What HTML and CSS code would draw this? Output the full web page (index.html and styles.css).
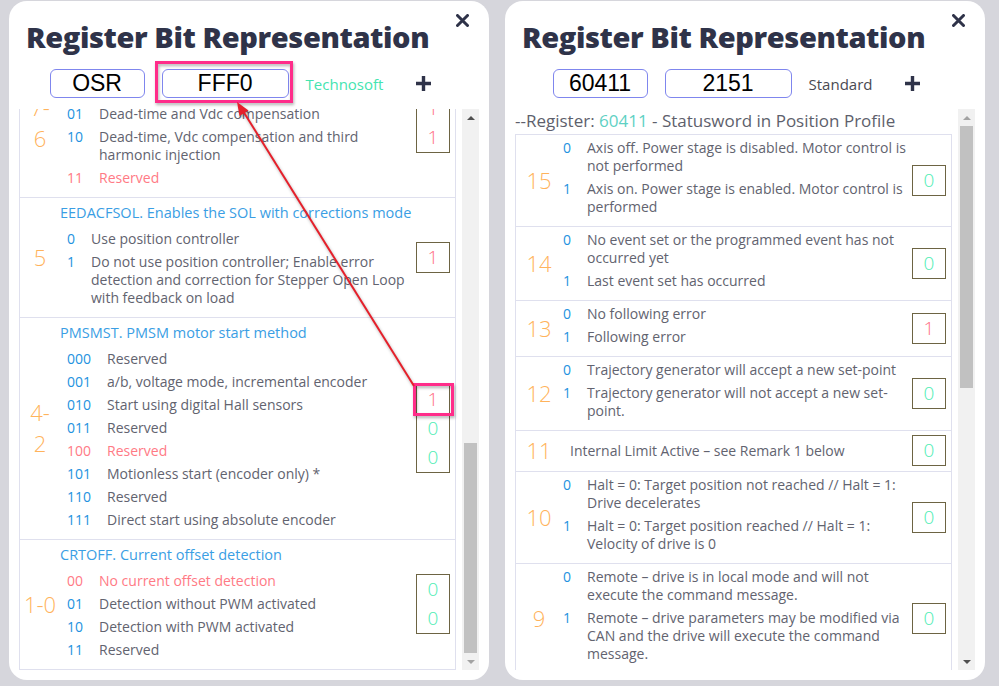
FILE: index.html
```html
<!DOCTYPE html>
<html lang="en">
<head>
<meta charset="utf-8">
<title>Register Bit Representation</title>
<link rel="stylesheet" href="styles.css">
</head>
<body>
<main class="desk">

  <section class="card">
    <div class="title-row">
      <h1 class="title">Register Bit Representation</h1>
      <button class="close" aria-label="Close"><svg viewBox="0 0 13 13" width="13" height="13"><path d="M1.5 1.5 L11.5 11.5 M11.5 1.5 L1.5 11.5" stroke="#2f3349" stroke-width="3" stroke-linecap="round"/></svg></button>
    </div>
    <div class="inputs">
      <div class="field field-reg">OSR</div>
      <div class="field field-val">FFF0</div>
      <span class="source source-ts">Technosoft</span>
      <button class="add" aria-label="Add"><svg viewBox="0 0 17 17" width="17" height="17"><path d="M8.5 1 V16 M1 8.5 H16" stroke="#2f3349" stroke-width="3.4"/></svg></button>
    </div>
    <div class="scroller">
      <div class="viewport viewport-end">
        <div class="bitlist bitlist-osr">
          <div class="bitrow">
            <div class="bit">8</div>
            <div class="desc">
              <div class="ftitle">Reserved</div>
              <ul class="opts">
                <li class="opt"><span class="code">0</span><span class="text">Reserved</span></li>
              </ul>
            </div>
            <div class="vals"><span class="v v0">0</span></div>
          </div>
          <div class="bitrow">
            <div class="bit">7-<br>6</div>
            <div class="desc">
              <div class="ftitle">DTCOMP. Dead-time compensation mode</div>
              <ul class="opts">
                <li class="opt"><span class="code">00</span><span class="text">No compensation</span></li>
                <li class="opt"><span class="code">01</span><span class="text">Dead-time and Vdc compensation</span></li>
                <li class="opt"><span class="code">10</span><span class="text">Dead-time, Vdc compensation and third harmonic injection</span></li>
                <li class="opt is-set"><span class="code">11</span><span class="text">Reserved</span></li>
              </ul>
            </div>
            <div class="vals"><span class="v v1">1</span><span class="v v1">1</span></div>
          </div>
          <div class="bitrow">
            <div class="bit">5</div>
            <div class="desc">
              <div class="ftitle">EEDACFSOL. Enables the SOL with corrections mode</div>
              <ul class="opts">
                <li class="opt"><span class="code">0</span><span class="text">Use position controller</span></li>
                <li class="opt"><span class="code">1</span><span class="text">Do not use position controller; Enable error detection and correction for Stepper Open Loop with feedback on load</span></li>
              </ul>
            </div>
            <div class="vals"><span class="v v1">1</span></div>
          </div>
          <div class="bitrow">
            <div class="bit">4-<br>2</div>
            <div class="desc">
              <div class="ftitle">PMSMST. PMSM motor start method</div>
              <ul class="opts">
                <li class="opt"><span class="code">000</span><span class="text">Reserved</span></li>
                <li class="opt"><span class="code">001</span><span class="text">a/b, voltage mode, incremental encoder</span></li>
                <li class="opt"><span class="code">010</span><span class="text">Start using digital Hall sensors</span></li>
                <li class="opt"><span class="code">011</span><span class="text">Reserved</span></li>
                <li class="opt is-set"><span class="code">100</span><span class="text">Reserved</span></li>
                <li class="opt"><span class="code">101</span><span class="text">Motionless start (encoder only) *</span></li>
                <li class="opt"><span class="code">110</span><span class="text">Reserved</span></li>
                <li class="opt"><span class="code">111</span><span class="text">Direct start using absolute encoder</span></li>
              </ul>
            </div>
            <div class="vals"><span class="v v1">1</span><span class="v v0">0</span><span class="v v0">0</span></div>
          </div>
          <div class="bitrow">
            <div class="bit">1-0</div>
            <div class="desc">
              <div class="ftitle">CRTOFF. Current offset detection</div>
              <ul class="opts">
                <li class="opt is-set"><span class="code">00</span><span class="text">No current offset detection</span></li>
                <li class="opt"><span class="code">01</span><span class="text">Detection without PWM activated</span></li>
                <li class="opt"><span class="code">10</span><span class="text">Detection with PWM activated</span></li>
                <li class="opt"><span class="code">11</span><span class="text">Reserved</span></li>
              </ul>
            </div>
            <div class="vals"><span class="v v0">0</span><span class="v v0">0</span></div>
          </div>
        </div>
      </div>
      <div class="sbar sbar-end">
        <span class="sb-btn"><span class="tri tri-up"></span></span>
        <div class="sb-track"><span class="sb-thumb thumb-osr"></span></div>
        <span class="sb-btn"><span class="tri tri-down is-dim"></span></span>
      </div>
    </div>
  </section>

  <section class="card">
    <div class="title-row">
      <h1 class="title">Register Bit Representation</h1>
      <button class="close" aria-label="Close"><svg viewBox="0 0 13 13" width="13" height="13"><path d="M1.5 1.5 L11.5 11.5 M11.5 1.5 L1.5 11.5" stroke="#2f3349" stroke-width="3" stroke-linecap="round"/></svg></button>
    </div>
    <div class="inputs">
      <div class="field field-reg">60411</div>
      <div class="field field-val">2151</div>
      <span class="source source-std">Standard</span>
      <button class="add" aria-label="Add"><svg viewBox="0 0 17 17" width="17" height="17"><path d="M8.5 1 V16 M1 8.5 H16" stroke="#2f3349" stroke-width="3.4"/></svg></button>
    </div>
    <div class="scroller">
      <div class="viewport">
        <div class="reg-head">--Register: <span class="reg-id">60411</span> - Statusword in Position Profile</div>
        <div class="bitlist bitlist-std">
          <div class="bitrow">
            <div class="bit">15</div>
            <div class="desc">
              <ul class="opts">
                <li class="opt"><span class="code">0</span><span class="text">Axis off. Power stage is disabled. Motor control is not performed</span></li>
                <li class="opt"><span class="code">1</span><span class="text">Axis on. Power stage is enabled. Motor control is performed</span></li>
              </ul>
            </div>
            <div class="vals"><span class="v v0">0</span></div>
          </div>
          <div class="bitrow">
            <div class="bit">14</div>
            <div class="desc">
              <ul class="opts">
                <li class="opt"><span class="code">0</span><span class="text">No event set or the programmed event has not occurred yet</span></li>
                <li class="opt"><span class="code">1</span><span class="text">Last event set has occurred</span></li>
              </ul>
            </div>
            <div class="vals"><span class="v v0">0</span></div>
          </div>
          <div class="bitrow">
            <div class="bit">13</div>
            <div class="desc">
              <ul class="opts">
                <li class="opt"><span class="code">0</span><span class="text">No following error</span></li>
                <li class="opt"><span class="code">1</span><span class="text">Following error</span></li>
              </ul>
            </div>
            <div class="vals"><span class="v v1">1</span></div>
          </div>
          <div class="bitrow">
            <div class="bit">12</div>
            <div class="desc">
              <ul class="opts">
                <li class="opt"><span class="code">0</span><span class="text">Trajectory generator will accept a new set-point</span></li>
                <li class="opt"><span class="code">1</span><span class="text">Trajectory generator will not accept a new set-point.</span></li>
              </ul>
            </div>
            <div class="vals"><span class="v v0">0</span></div>
          </div>
          <div class="bitrow">
            <div class="bit">11</div>
            <div class="desc">
              <p class="note">Internal Limit Active – see Remark 1 below</p>
            </div>
            <div class="vals"><span class="v v0">0</span></div>
          </div>
          <div class="bitrow">
            <div class="bit">10</div>
            <div class="desc">
              <ul class="opts">
                <li class="opt"><span class="code">0</span><span class="text">Halt = 0: Target position not reached // Halt = 1: Drive decelerates</span></li>
                <li class="opt"><span class="code">1</span><span class="text">Halt = 0: Target position reached // Halt = 1: Velocity of drive is 0</span></li>
              </ul>
            </div>
            <div class="vals"><span class="v v0">0</span></div>
          </div>
          <div class="bitrow">
            <div class="bit">9</div>
            <div class="desc">
              <ul class="opts">
                <li class="opt"><span class="code">0</span><span class="text">Remote – drive is in local mode and will not execute the command message.</span></li>
                <li class="opt"><span class="code">1</span><span class="text">Remote – drive parameters may be modified via CAN and the drive will execute the command message.</span></li>
              </ul>
            </div>
            <div class="vals"><span class="v v0">0</span></div>
          </div>
          <div class="bitrow">
            <div class="bit">8</div>
            <div class="desc">
              <ul class="opts">
                <li class="opt"><span class="code">0</span><span class="text">No fault is active</span></li>
                <li class="opt"><span class="code">1</span><span class="text">A fault has occurred</span></li>
              </ul>
            </div>
            <div class="vals"><span class="v v0">0</span></div>
          </div>
        </div>
      </div>
      <div class="sbar">
        <span class="sb-btn"><span class="tri tri-up is-dim"></span></span>
        <div class="sb-track"><span class="sb-thumb thumb-std"></span></div>
        <span class="sb-btn"><span class="tri tri-down"></span></span>
      </div>
    </div>
  </section>

</main>

<svg class="annot" width="999" height="686" viewBox="0 0 999 686" aria-hidden="true">
  <rect x="156.5" y="62.5" width="135" height="39" fill="none" stroke="#ff2d8a" stroke-width="3"/>
  <rect x="414.5" y="384.5" width="38" height="30" fill="none" stroke="#ff2d8a" stroke-width="3"/>
  <line x1="243" y1="111" x2="414" y2="386" stroke="#e5202b" stroke-width="2"/>
  <polygon points="237,102 239.5,116 248.5,110.5" fill="#e5202b"/>
</svg>
</body>
</html>
```
FILE: styles.css
```css
* { box-sizing: border-box; }

html, body {
  margin: 0;
  padding: 0;
}

body {
  position: relative;
  width: 999px;
  height: 686px;
  overflow: hidden;
  background: #d6d6dc;
  font-family: "Open Sans", "DejaVu Sans", sans-serif;
  color: #62636f;
}

.desk {
  display: flex;
  gap: 16px;
  padding: 1px 0 0 9px;
}

.card {
  width: 480px;
  height: 679px;
  background: #ffffff;
  border-radius: 18px;
  padding: 18px 10px 10px 10px;
  display: flex;
  flex-direction: column;
}

.title-row {
  display: flex;
  justify-content: space-between;
  align-items: flex-start;
  padding: 0 10px 0 7px;
}

.title {
  margin: 0;
  font-family: "Open Sans", sans-serif;
  font-weight: 800;
  font-size: 29px;
  letter-spacing: -0.4px;
  line-height: 36px;
  color: #2f3349;
  white-space: nowrap;
}

.close, .add {
  border: 0;
  padding: 0;
  background: none;
  display: block;
  line-height: 0;
}

.close { margin-top: -5px; }
.close svg, .add svg { display: block; }

.inputs {
  margin-top: 14px;
  margin-bottom: 11px;
  height: 29px;
  display: flex;
  align-items: center;
  justify-content: center;
  gap: 17px;
  padding-right: 16px;
}

.field {
  height: 29px;
  border: 1px solid #7f86ee;
  border-radius: 6px;
  font-family: "Liberation Sans", Arial, sans-serif;
  font-size: 23px;
  line-height: 27px;
  color: #000;
  text-align: center;
}

.field-reg { width: 95px; }
.field-val { width: 127px; }

.source { font-size: 15px; }
.source-ts { color: #45e4b0; }
.source-std { color: #4a4a52; }

.add { margin-left: 15px; }

.scroller {
  flex: 1;
  min-height: 0;
  display: flex;
  gap: 6px;
}

.viewport {
  flex: 1;
  min-width: 0;
  overflow: hidden;
  display: flex;
  flex-direction: column;
}

.viewport-end { justify-content: flex-end; }

.bitlist {
  flex: none;
  border-left: 1px solid #dfe0ee;
  border-right: 1px solid #dfe0ee;
  border-bottom: 1px solid #dfe0ee;
}

.bitrow {
  display: flex;
  align-items: center;
  border-top: 1px solid #dfe0ee;
  padding: 4px 0 5px;
}

.bit {
  flex: none;
  text-align: center;
  color: #ffb35c;
  font-weight: 300;
  font-size: 22px;
  line-height: 31px;
}

.bitlist-osr .bit { width: 40px; }
.bitlist-std .bit { width: 46px; }

.desc {
  flex: 1;
  min-width: 0;
  margin-right: 2px;
}

.ftitle {
  color: #3a9ee4;
  font-size: 14.5px;
  line-height: 22px;
  margin-bottom: 6px;
  white-space: nowrap;
}

.opts {
  list-style: none;
  margin: 0;
  padding: 0;
}

.bitlist-osr .opts { padding-left: 7px; }
.bitlist-std .opts { padding-left: 1px; }

.opt {
  display: flex;
  font-size: 14px;
  line-height: 18px;
  margin-bottom: 5px;
}

.code {
  flex: none;
  margin-right: 16px;
  color: #2392e0;
  font-weight: 500;
}

.text { flex: 1; min-width: 0; }

.opt.is-set .code,
.opt.is-set .text { color: #ff7a85; }

.note {
  margin: 0;
  padding-left: 8px;
  font-size: 14px;
  line-height: 18px;
}

.vals {
  flex: none;
  width: 34px;
  margin-right: 5px;
  border: 1px solid #6d6443;
  display: flex;
  flex-direction: column;
  align-items: center;
}

.v {
  font-weight: 300;
  font-size: 19px;
  line-height: 29px;
}

.v1 { color: #ff6f86; }
.v0 { color: #4eedb4; }

.reg-head {
  flex: none;
  padding: 1px 0 2px;
  font-size: 17px;
  line-height: 22px;
  font-weight: 500;
  color: #5e5f6c;
  white-space: nowrap;
}

.reg-id { color: #5fd1c4; }

.sbar {
  flex: none;
  width: 17px;
  background: #f1f1f1;
  display: flex;
  flex-direction: column;
}

.sb-btn {
  flex: none;
  height: 17px;
  display: flex;
  align-items: center;
  justify-content: center;
}

.tri {
  width: 0;
  height: 0;
  border-left: 4px solid transparent;
  border-right: 4px solid transparent;
}

.tri-up { border-bottom: 4px solid #505050; }
.tri-down { border-top: 4px solid #505050; }
.tri-up.is-dim { border-bottom-color: #a3a3a3; }
.tri-down.is-dim { border-top-color: #a3a3a3; }

.sb-track {
  flex: 1;
  display: flex;
  flex-direction: column;
}

.sbar-end .sb-track { justify-content: flex-end; }

.sb-thumb {
  display: block;
  margin: 0 2px;
  background: #c1c1c1;
}

.thumb-osr { height: 210px; }
.thumb-std { height: 262px; }

.annot {
  position: absolute;
  left: 0;
  top: 0;
  pointer-events: none;
  filter: drop-shadow(1px 2px 1.5px rgba(0, 0, 0, 0.3));
}
```
